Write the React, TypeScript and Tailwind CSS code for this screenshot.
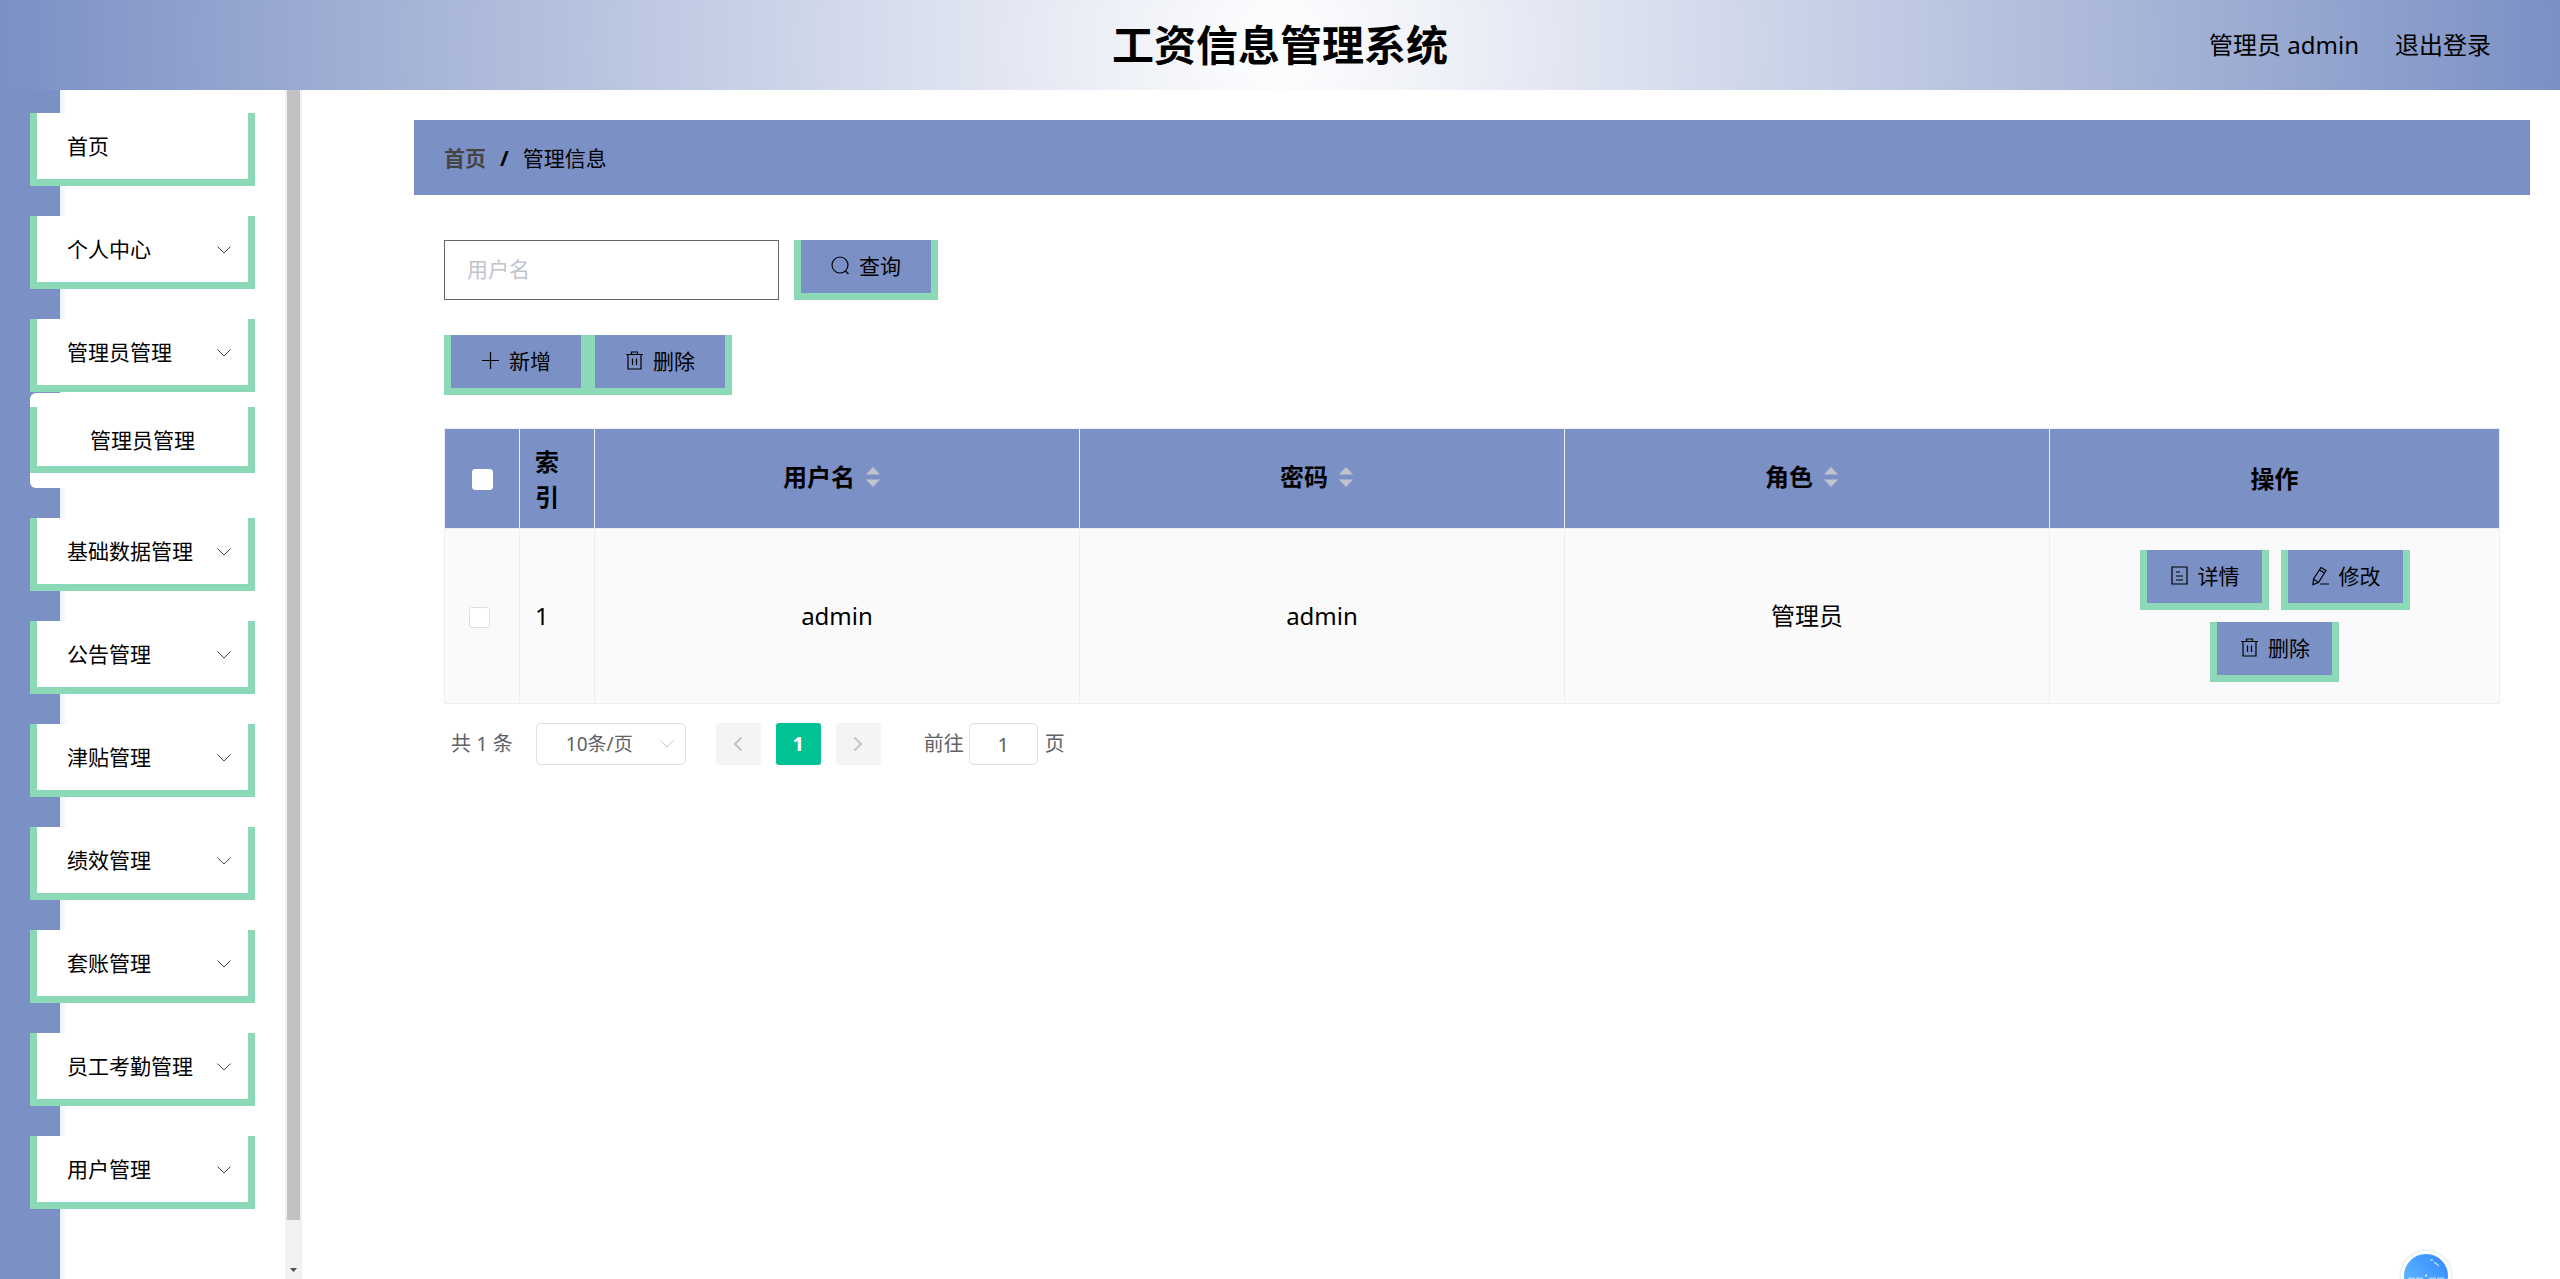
import type { ReactNode } from "react";

const menu: { label: string; children?: string[]; leaf?: boolean }[] = [
  { label: "首页", leaf: true },
  { label: "个人中心" },
  { label: "管理员管理", children: ["管理员管理"] },
  { label: "基础数据管理" },
  { label: "公告管理" },
  { label: "津贴管理" },
  { label: "绩效管理" },
  { label: "套账管理" },
  { label: "员工考勤管理" },
  { label: "用户管理" },
];

const iconPaths = {
  search: (
    <>
      <circle cx="10" cy="10" r="8" />
      <path d="M15.5 16 L18.5 19" />
    </>
  ),
  plus: <path d="M10.5 2 V19 M2 10.5 H19" />,
  trash: <path d="M2 4.5 H19 M7.5 4.5 V2 H13.5 V4.5 M4 4.5 V19 H17 V4.5 M8.5 8.5 V15 M12.5 8.5 V15" />,
  doc: <path d="M3 2 H18 V19 H3 Z M7 7 H11 M7 11 H14 M7 15 H14" />,
  edit: <path d="M11 2.5 L16 5.5 L8.5 17.5 L3 19.5 L3.5 14 Z M9.5 5 L14.5 8 M3.5 14 L8.5 17.5 M10 19 H19" />,
};

function Icon({ name }: { name: keyof typeof iconPaths }) {
  return (
    <svg viewBox="0 0 21 21" className="size-[21px] shrink-0 fill-none stroke-black stroke-[1.2]" aria-hidden="true">
      {iconPaths[name]}
    </svg>
  );
}

function Chevron({ className }: { className: string }) {
  return (
    <svg viewBox="0 0 14 8" className={className} aria-hidden="true">
      <path d="M0.5 0.5 L7 7 L13.5 0.5" />
    </svg>
  );
}

function ActionButton({ icon, children, small }: { icon: keyof typeof iconPaths; children: ReactNode; small?: boolean }) {
  return (
    <button
      type="button"
      className={`flex h-[60px] items-center gap-2 border-x-[7px] border-b-[7px] border-[#8cd9b8] bg-[#7b90c4] pb-0.5 text-[21px] leading-7 text-black ${small ? "px-[22px]" : "pr-[30px] pl-[29px]"}`}
    >
      <Icon name={icon} />
      {children}
    </button>
  );
}

function SortHeader({ children }: { children: ReactNode }) {
  return (
    <th scope="col" className="border-r border-[#ebeef5] pb-1">
      <button type="button" className="inline-flex items-center font-bold">
        {children}
        <span className="flex w-9 justify-center">
          <svg viewBox="0 0 14 20" className="h-5 w-[14px] fill-[#c0c4cc]" aria-hidden="true">
            <path d="M7 0 L14 7.5 H0 Z M0 12.5 H14 L7 20 Z" />
          </svg>
        </span>
      </button>
    </th>
  );
}

function Check({ label, className }: { label: string; className: string }) {
  return (
    <input
      type="checkbox"
      aria-label={label}
      className={`mt-0.5 block size-[21px] appearance-none rounded-[3px] border bg-white ${className}`}
    />
  );
}

function Header() {
  return (
    <header className="relative flex h-[90px] shrink-0 items-center justify-center bg-[radial-gradient(circle_farthest-side_at_center,#ffffff,#7b90c4)]">
      <h1 className="text-[42px] leading-[60px] font-bold">工资信息管理系统</h1>
      <div className="absolute inset-y-0 right-[69px] flex items-center gap-9 text-2xl">
        <span>管理员 admin</span>
        <a href="#logout">退出登录</a>
      </div>
    </header>
  );
}

function Sidebar() {
  return (
    <aside className="flex w-[302px] shrink-0 bg-white">
      <nav className="min-w-0 flex-1 overflow-hidden bg-[linear-gradient(to_right,#7b90c4_60px,#eaf3ff_60px,#ffffff_68px)] pt-[23px] pr-[30px] pl-[30px]">
        <ul className="flex flex-col gap-[30px] text-[21px]">
          {menu.map((item) => (
            <li key={item.label}>
              <a
                href="#menu"
                className="flex h-[73px] items-center justify-between border-x-[7px] border-b-[7px] border-[#8cd9b8] bg-white pt-0.5 pr-[17px] pl-[30px]"
              >
                {item.label}
                {!item.leaf && <Chevron className="h-2 w-[14px] fill-none stroke-[#444]" />}
              </a>
              {item.children && (
                <ul className="mt-px rounded-md bg-white pt-[14px] pb-[15px]">
                  {item.children.map((child) => (
                    <li key={child}>
                      <a
                        href="#submenu"
                        className="flex h-[66px] items-center border-x-[7px] border-b-[7px] border-[#8cd9b8] bg-white pt-2 pl-[53px]"
                      >
                        {child}
                      </a>
                    </li>
                  ))}
                </ul>
              )}
            </li>
          ))}
        </ul>
      </nav>
      <div className="flex w-[17px] flex-col items-center bg-[#f1f1f1]" aria-hidden="true">
        <div className="mb-12 w-[13px] flex-1 bg-[#c1c1c1]" />
        <svg viewBox="0 0 7 4" className="mb-[7px] h-1 w-[7px] fill-[#505050]">
          <path d="M0 0 H7 L3.5 4 Z" />
        </svg>
      </div>
    </aside>
  );
}

function DataTable() {
  return (
    <table className="mt-[33px] w-full table-fixed border-collapse border border-[#ebeef5] text-2xl leading-[35px]">
      <colgroup>
        <col className="w-[75px]" />
        <col className="w-[75px]" />
        <col />
        <col />
        <col />
        <col className="w-[450px]" />
      </colgroup>
      <thead className="bg-[#7b90c4]">
        <tr className="h-[100px] border-b border-[#ebeef5]">
          <th scope="col" className="border-r border-[#ebeef5] pl-[27px]">
            <Check label="全选" className="border-white" />
          </th>
          <th scope="col" className="border-r border-[#ebeef5] px-[15px] text-left font-bold">
            索引
          </th>
          <SortHeader>用户名</SortHeader>
          <SortHeader>密码</SortHeader>
          <SortHeader>角色</SortHeader>
          <th scope="col" className="font-bold">操作</th>
        </tr>
      </thead>
      <tbody className="bg-[#fafafa] text-center">
        <tr className="h-[175px]">
          <td className="border-r border-[#ebeef5] pl-[24px]">
            <Check label="选择第 1 行" className="border-[#dcdfe6]" />
          </td>
          <td className="border-r border-[#ebeef5] px-[15px] pb-0.5 text-left">1</td>
          <td className="border-r border-[#ebeef5] pb-0.5">admin</td>
          <td className="border-r border-[#ebeef5] pb-0.5">admin</td>
          <td className="border-r border-[#ebeef5] pb-0.5">管理员</td>
          <td>
            <div className="flex flex-wrap justify-center gap-3 px-20">
              <ActionButton icon="doc" small>详情</ActionButton>
              <ActionButton icon="edit" small>修改</ActionButton>
              <ActionButton icon="trash" small>删除</ActionButton>
            </div>
          </td>
        </tr>
      </tbody>
    </table>
  );
}

function Pagination() {
  const pager = "flex h-[42px] w-[45px] items-center justify-center rounded-[3px]";
  return (
    <div className="mt-[19px] flex items-center pl-[7px] text-xl leading-7 text-[#606266]">
      <span>共 1 条</span>
      <div className="relative ml-[23px]">
        <select
          aria-label="每页条数"
          className="h-[42px] w-[150px] appearance-none rounded-[5px] border border-[#dcdfe6] bg-white pl-[29px] text-[19px]"
        >
          <option>10条/页</option>
        </select>
        <Chevron className="pointer-events-none absolute top-[17px] right-3 h-2 w-[14px] fill-none stroke-[#c0c4cc]" />
      </div>
      <div className="ml-[30px] flex gap-[15px]">
        <button type="button" aria-label="上一页" className={`${pager} bg-[#f4f4f5]`}>
          <Chevron className="h-2 w-[14px] rotate-90 fill-none stroke-[#c0c4cc] stroke-2" />
        </button>
        <button type="button" className={`${pager} bg-[#00c292] font-bold text-white`}>
          1
        </button>
        <button type="button" aria-label="下一页" className={`${pager} bg-[#f4f4f5]`}>
          <Chevron className="h-2 w-[14px] -rotate-90 fill-none stroke-[#c0c4cc] stroke-2" />
        </button>
      </div>
      <label className="ml-[43px] flex items-center">
        前往
        <input
          type="text"
          defaultValue="1"
          className="mr-[7px] ml-[5px] h-[42px] w-[69px] rounded-[5px] border border-[#dcdfe6] bg-white text-center"
        />
        页
      </label>
    </div>
  );
}

function Assistant() {
  return (
    <button
      type="button"
      aria-label="助手"
      className="fixed right-[109px] -bottom-[22px] size-[50px] rounded-full border-[3px] border-white bg-linear-to-bl from-[#2f86ff] to-[#6cc0ff] shadow-[0_0_3px_#a9cdd8]"
    >
      <svg viewBox="0 0 44 44" className="size-11 fill-none stroke-white" aria-hidden="true">
        <path d="M26 6 H29 M30 8 L35 12" strokeWidth="1.5" opacity="0.6" />
        <path d="M4 25 H11 M12 25 H19 M25 25 H32 M33 25 H40" strokeWidth="3" opacity="0.5" />
        <path d="M21 21.5 H23" strokeWidth="1.5" />
      </svg>
    </button>
  );
}

export default function App() {
  return (
    <div className="flex h-screen flex-col overflow-hidden bg-white font-['Noto_Sans','Noto_Sans_CJK_SC',sans-serif] text-black">
      <Header />
      <div className="flex min-h-0 flex-1">
        <Sidebar />
        <main className="min-w-0 flex-1 pt-[30px] pr-[30px] pl-[112px]">
          <nav aria-label="面包屑" className="flex h-[75px] items-center bg-[#7b90c4] px-[30px] pt-0.5 text-[21px]">
            <a href="#home" className="font-bold text-[#444]">首页</a>
            <span className="mx-[14px] font-bold">/</span>
            <span>管理信息</span>
          </nav>
          <div className="px-[30px] pt-[45px]">
            <form className="flex items-end gap-[15px]" onSubmit={(e) => e.preventDefault()}>
              <input
                type="text"
                aria-label="用户名"
                placeholder="用户名"
                className="h-[60px] w-[335px] border border-[#666] px-[22px] pb-0.5 text-[21px] placeholder:text-[#c0c4cc]"
              />
              <ActionButton icon="search">查询</ActionButton>
            </form>
            <div className="mt-[35px] flex">
              <ActionButton icon="plus">新增</ActionButton>
              <ActionButton icon="trash">删除</ActionButton>
            </div>
            <DataTable />
            <Pagination />
          </div>
        </main>
      </div>
      <Assistant />
    </div>
  );
}
